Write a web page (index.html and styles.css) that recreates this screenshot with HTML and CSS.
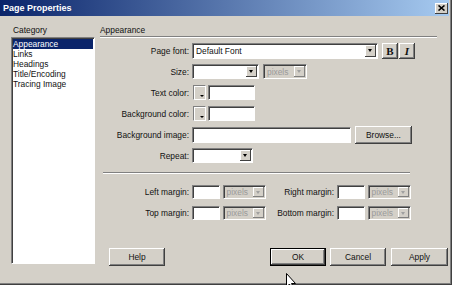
FILE: index.html
```html
<!DOCTYPE html>
<html lang="en">
<head>
	<meta charset="UTF-8"/>
	<title>Page Properties</title>
	<link rel="stylesheet" href="styles.css">
</head>
<body>
	<div class="dialog">
		<div class="titlebar">
			<span>Page Properties</span>
			<span class="close">
				<svg width="7" height="6" viewBox="0 0 7 6"><path d="M0.5 0.5 L6.5 5.5 M6.5 0.5 L0.5 5.5" stroke="#000" stroke-width="1.6"/></svg>
			</span>
		</div>

		<div class="main">
			<div class="side">
				<div class="side-label">Category</div>
				<ul class="list">
					<li class="sel">Appearance</li>
					<li>Links</li>
					<li>Headings</li>
					<li>Title/Encoding</li>
					<li>Tracing Image</li>
				</ul>
			</div>

			<div class="panel">
				<div class="panel-head">Appearance</div>

				<div class="form">
					<div class="label">Page font:</div>
					<div class="ctl">
						<div class="field select w-font tall"><span>Default Font</span><span class="arrow"></span></div>
						<span class="tbtn bold">B</span>
						<span class="tbtn ital">I</span>
					</div>

					<div class="label">Size:</div>
					<div class="ctl">
						<div class="field select w-size"><span></span><span class="arrow"></span></div>
						<div class="field select off w-px"><span>pixels</span><span class="arrow"></span></div>
					</div>

					<div class="label">Text color:</div>
					<div class="ctl">
						<span class="swatch"></span>
						<div class="field w-color"></div>
					</div>

					<div class="label">Background color:</div>
					<div class="ctl">
						<span class="swatch"></span>
						<div class="field w-color"></div>
					</div>

					<div class="label">Background image:</div>
					<div class="ctl">
						<div class="field w-image tall"></div>
						<span class="btn browse">Browse...</span>
					</div>

					<div class="label">Repeat:</div>
					<div class="ctl">
						<div class="field select w-repeat"><span></span><span class="arrow"></span></div>
					</div>
				</div>

				<div class="sep"></div>

				<div class="margins">
					<div class="label">Left margin:</div>
					<div class="ctl">
						<div class="field small w-num"></div>
						<div class="field select off small w-px"><span>pixels</span><span class="arrow"></span></div>
					</div>
					<div class="label">Right margin:</div>
					<div class="ctl">
						<div class="field small w-num"></div>
						<div class="field select off small w-px"><span>pixels</span><span class="arrow"></span></div>
					</div>

					<div class="label">Top margin:</div>
					<div class="ctl">
						<div class="field small w-num"></div>
						<div class="field select off small w-px"><span>pixels</span><span class="arrow"></span></div>
					</div>
					<div class="label">Bottom margin:</div>
					<div class="ctl">
						<div class="field small w-num"></div>
						<div class="field select off small w-px"><span>pixels</span><span class="arrow"></span></div>
					</div>
				</div>

				<div class="buttons">
					<span class="btn">Help</span>
					<span class="btn default">OK</span>
					<span class="btn">Cancel</span>
					<span class="btn apply">Apply</span>
				</div>
			</div>
		</div>

		<!-- mouse pointer over the OK button -->
		<svg class="pointer" width="12" height="18" viewBox="0 0 12 18">
			<path d="M0.5 0.5 L0.5 14 L3.5 11 L6 16.5 L8 15.5 L5.5 10.5 L9.5 10.5 Z" fill="#fff" stroke="#000" stroke-width="1"/>
		</svg>
	</div>
</body>
</html>
```

FILE: styles.css
```css
* {
	margin: 0;
	padding: 0;
	box-sizing: border-box;
}

body {
	background-color: #d4d0c8;
	color: #111;
	font-family: "Liberation Sans", Arial, sans-serif;
	font-size: 8.4px;
}

.dialog {
	position: relative;
	width: 452px;
	height: 285px;
	overflow: hidden;
	background-color: #d4d0c8;
	box-shadow: inset -1px -1px #404040, inset -2px -2px #808080;
}

.titlebar {
	display: flex;
	justify-content: space-between;
	align-items: center;
	height: 16px;
	margin-right: 3px;
	padding-left: 3px;
	background: linear-gradient(to right, #0a246a, #a6caf0);
	color: #fff;
	font-size: 9px;
	font-weight: bold;
}
.close {
	display: flex;
	justify-content: center;
	align-items: center;
	width: 13px;
	height: 11px;
	margin-right: 1px;
	background-color: #d4d0c8;
	box-shadow: inset -1px -1px #404040, inset 1px 1px #fff;
}

.main {
	display: flex;
	padding: 9px 0 0 11px;
}

.side {
	width: 84px;
}
.side-label {
	height: 12px;
	padding-left: 2px;
	line-height: 10px;
}
.list {
	height: 227px;
	padding: 1px 1px 0 1px;
	list-style: none;
	background-color: #fff;
	border: 1px solid;
	border-color: #808080 #fff #fff #808080;
	box-shadow: inset 1px 1px #404040;
}
.list li {
	line-height: 10px;
}
.list .sel {
	background-color: #0a246a;
	color: #fff;
}

.panel {
	width: 349px;
	margin-left: 5px;
}
.panel-head {
	width: 337px;
	padding-bottom: 1px;
	line-height: 10px;
	border-bottom: 1px solid #808080;
	box-shadow: 0 1px #fff;
}

.form {
	display: grid;
	grid-template-columns: 89px auto;
	grid-auto-rows: 21px;
	column-gap: 3px;
	align-items: center;
	margin-top: 3px;
}
.label {
	text-align: right;
	white-space: nowrap;
}
.ctl {
	display: flex;
	align-items: center;
}

.field {
	height: 15px;
	background-color: #fff;
	border: 1px solid;
	border-color: #808080 #fff #fff #808080;
	box-shadow: inset 1px 1px #404040;
}
.field.tall {
	height: 16px;
}
.field.small {
	height: 14px;
}
.select {
	display: flex;
	justify-content: space-between;
	align-items: center;
	padding: 0 1px 0 3px;
}
.select.off {
	background-color: #d4d0c8;
	color: #9a9a9a;
}
.arrow {
	position: relative;
	width: 11px;
	height: 11px;
	background-color: #d4d0c8;
	box-shadow: inset -1px -1px #404040, inset 1px 1px #fff;
}
.tall .arrow {
	height: 12px;
}
.small .arrow {
	height: 10px;
}
.arrow::after {
	content: "";
	position: absolute;
	left: 3px;
	top: 4px;
	border-left: 2.5px solid transparent;
	border-right: 2.5px solid transparent;
	border-top: 3px solid #000;
}
.off .arrow {
	box-shadow: inset -1px -1px #808080, inset 1px 1px #fff;
}
.off .arrow::after {
	border-top-color: #a0a0a0;
}

.w-font { width: 186px; }
.w-size { width: 67px; margin-right: 4px; }
.w-px { width: 44px; }
.w-color { width: 47px; }
.w-image { width: 159px; margin-right: 4px; }
.w-repeat { width: 61px; }
.w-num { width: 28px; margin-right: 3px; }

.tbtn {
	display: flex;
	justify-content: center;
	align-items: center;
	width: 16px;
	height: 16px;
	margin-left: 1px;
	background-color: #d4d0c8;
	font-family: "Liberation Serif", serif;
	font-size: 11px;
	font-weight: bold;
	box-shadow: inset -1px -1px #404040, inset 1px 1px #fff, inset -2px -2px #808080;
}
.tbtn.bold {
	margin-left: 4px;
}
.tbtn.ital {
	font-style: italic;
}

.swatch {
	position: relative;
	width: 13px;
	height: 15px;
	margin: 0 2px 0 1px;
	background-color: #d4d0c8;
	border: 1px solid;
	border-color: #808080 #fff #fff #808080;
	box-shadow: inset 1px 1px #fff;
}
.swatch::after {
	content: "";
	position: absolute;
	right: 1px;
	bottom: 2px;
	border-left: 2px solid transparent;
	border-right: 2px solid transparent;
	border-top: 2px solid #000;
}

.btn {
	display: flex;
	justify-content: center;
	align-items: center;
	width: 56px;
	height: 18px;
	background-color: #d4d0c8;
	box-shadow: inset -1px -1px #404040, inset 1px 1px #fff, inset -2px -2px #808080;
}
.btn.browse {
	width: 57px;
}
.btn.default {
	margin-left: 101px;
	border: 1px solid #000;
}
.btn.apply {
	width: 57px;
	margin-left: 1px;
}

.sep {
	width: 307px;
	height: 2px;
	margin: 6px 0 0 3px;
	border-top: 1px solid #808080;
	border-bottom: 1px solid #fff;
}

.margins {
	display: grid;
	grid-template-columns: 89px 74px 65px 74px;
	grid-auto-rows: 21px;
	column-gap: 3px;
	align-items: center;
	margin-top: 7px;
}

.buttons {
	display: flex;
	gap: 4px;
	margin: 25px 0 0 9px;
}

.pointer {
	position: absolute;
	left: 286px;
	top: 273px;
}
```
